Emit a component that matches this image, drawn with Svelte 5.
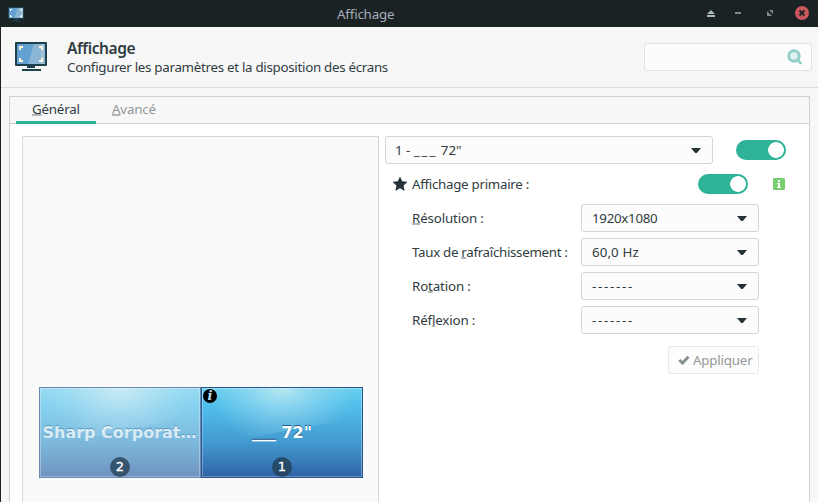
<script>
  const rows = [
    { parts: ['', 'R', 'ésolution :'], value: '1920x1080', kind: 'size' },
    { parts: ['Taux de ', 'r', 'afraîchissement :'], value: '60,0 Hz', kind: 'rate', tight: true },
    { parts: ['Ro', 't', 'ation :'], value: '-------', kind: 'dashes' },
    { parts: ['Réf', 'l', 'exion :'], value: '-------', kind: 'dashes' }
  ];
  const screens = [
    { name: 'Sharp Corporat…', number: 2, active: false },
    { name: '___ 72"', number: 1, active: true }
  ];
</script>

{#snippet monitor(size)}
  <svg class="monitor" width={size} height={size} viewBox="0 0 32 32">
    <rect x="0" y="2" width="32" height="24" rx="1" fill="#1e414e" />
    <rect x="2" y="4" width="28" height="20" fill="#62a1d1" />
    <path d="M19 4h11v20H13z" fill="#8bb5d4" />
    <path d="M26 4h3v20h-3z" fill="#a2c3d8" />
    <path d="M4 6h4v2H6v2H4zM24 6h4v4h-2V8h-2zM4 18h2v2h2v2H4zM26 18h2v4h-4v-2h2z" fill="#fff5df" />
    <path d="M12 26h8v2h-8zM7 29h19v2H7z" fill="#1e414e" />
  </svg>
{/snippet}

{#snippet caret()}
  <svg class="caret" width="10" height="6" viewBox="0 0 10 6"><path d="M0 0h10L6 4.7Q5 5.5 4 4.7z" fill="#263238" /></svg>
{/snippet}

<div class="window">
  <div class="titlebar">
    <div class="appicon">{@render monitor(16)}</div>
    <span class="title">Affichage</span>
    <svg class="controls" width="112" height="27" viewBox="0 0 112 27">
      <path d="M5 10l4 4H1zM1 15h8v2H1z" fill="#a9bcc0" />
      <path d="M29 12h6v2h-6z" fill="#7d898b" />
      <path d="M61 11v5h5zM63 10h4v4z" fill="#7d898b" />
      <circle cx="96" cy="13" r="7" fill="#cb575d" />
      <path d="M93.5 10.5l5 5m0-5l-5 5" stroke="#1b2224" stroke-width="1.8" />
    </svg>
  </div>

  <header>
    <div class="logo">{@render monitor(32)}</div>
    <div class="heading">
      <div class="name">Affichage</div>
      <div class="sub">Configurer les paramètres et la disposition des écrans</div>
    </div>
    <div class="search">
      <svg width="16" height="16" viewBox="0 0 16 16">
        <path d="M10.5 11l3.2 3.2" stroke="#92cfc9" stroke-width="2.6" stroke-linecap="round" />
        <circle cx="7" cy="7" r="5.2" fill="#e2f2f0" stroke="#92cfc9" stroke-width="3" />
      </svg>
    </div>
  </header>

  <div class="notebook">
    <nav>
      <div class="tab current"><span><u>G</u>énéral</span></div>
      <div class="tab"><span><u>A</u>vancé</span></div>
    </nav>
    <main>
      <section class="canvas">
        <div class="screens">
          {#each screens as screen}
            <div class="screen" class:active={screen.active}>
              <svg class="wall" width="162" height="91" viewBox="0 0 162 91">
                <defs>
                  <linearGradient id="sky{screen.number}" x1="0" y1="0" x2="0" y2="1">
                    <stop offset="0" stop-color="#6bd0ec" />
                    <stop offset=".2" stop-color="#52c0ec" />
                    <stop offset=".6" stop-color="#429bd0" />
                    <stop offset=".8" stop-color="#3a80ba" />
                    <stop offset="1" stop-color="#2b5fa3" />
                  </linearGradient>
                  <radialGradient id="glow{screen.number}" gradientUnits="userSpaceOnUse" cx="0" cy="0" r="1" gradientTransform="translate(81 0) scale(74 60)">
                    <stop offset="0" stop-color="#d2f1f4" stop-opacity=".75" />
                    <stop offset=".5" stop-color="#b8e4f2" stop-opacity=".38" />
                    <stop offset="1" stop-color="#a0dced" stop-opacity="0" />
                  </radialGradient>
                </defs>
                <rect width="162" height="91" fill="url(#sky{screen.number})" />
                <path d="M0 0h162v30Q100 40 40 53Q20 55 0 56z" fill="url(#glow{screen.number})" />
                <rect x="1.5" y="1.5" width="159" height="88" fill="none" stroke="#fff" stroke-opacity=".3" />
                <rect x=".5" y=".5" width="161" height="90" fill="none" stroke="#255493" />
              </svg>
              {#if screen.active}
                <span class="info">i</span>
              {/if}
              <span class="label">{screen.name}</span>
              <span class="badge">{screen.number}</span>
            </div>
          {/each}
        </div>
      </section>

      <section class="form">
        <div class="line">
          <div class="combo wide"><span>1 - <span class="blanks">___</span> 72"</span>{@render caret()}</div>
          <div class="switch"></div>
        </div>
        <div class="line">
          <svg class="star" width="14" height="14" viewBox="0 0 14 14"><path d="M7 0l2.1 4.5 4.9.6-3.6 3.4.9 5L7 11l-4.3 2.5.9-5L0 5.1l4.9-.6z" fill="#263238" stroke="#263238" stroke-width=".5" stroke-linejoin="round" /></svg>
          <span class="plabel">Affichage primaire :</span>
          <div class="switch"></div>
          <svg class="hint" width="12" height="12" viewBox="0 0 12 12"><rect width="12" height="12" rx="1" fill="#78ce6e" /><path d="M5 2h2v2H5zM4 5h3v4h1v1H4V9h1V6H4z" fill="#fff" /></svg>
        </div>
        {#each rows as row}
          <div class="line">
            <span class="rlabel" class:tight={row.tight}>{#if row.parts[0]}{row.parts[0]}{/if}<u>{row.parts[1]}</u>{row.parts[2]}</span>
            <div class="combo"><span class={row.kind}>{row.value}</span>{@render caret()}</div>
          </div>
        {/each}
        <button disabled>
          <svg width="12" height="10" viewBox="0 0 12 10"><path d="M1.3 5l3.2 3L10.5 1.8" fill="none" stroke="#899091" stroke-width="3" /></svg>
          <span>Appliquer</span>
        </button>
      </section>
    </main>
  </div>
</div>

<style>
  :global(body) { margin: 0; overflow: hidden; }
  .window {
    box-sizing: border-box;
    width: 818px;
    height: 502px;
    overflow: hidden;
    display: flex;
    flex-direction: column;
    background: #f7f7f7;
    border-left: 1px solid #1b2224;
    color: #303c41;
    font: 13.333px/18px "Noto Sans", sans-serif;
    letter-spacing: -.29px;
    white-space: nowrap;
  }
  svg { display: block; flex: none; }
  u { text-decoration: underline; text-decoration-color: #b0b5b7; text-underline-offset: 0; text-decoration-thickness: 2px; text-decoration-skip-ink: none; }
  .titlebar {
    flex: none;
    height: 27px;
    display: flex;
    align-items: center;
    background: #1b2224;
    margin-left: -1px;
    color: #a6adb9;
    letter-spacing: -.18px;
  }
  .appicon { width: 16px; margin-left: 8px; margin-right: 313px; }
  .title { flex: 1; }
  header {
    flex: none;
    box-sizing: border-box;
    height: 61px;
    display: flex;
    border-bottom: 1px solid #dcdcdc;
  }
  .logo { margin: 13px 20px 0 14px; }
  .heading { flex: 1; padding-top: 11px; }
  .name { font-size: 15.5px; font-weight: 600; line-height: 21px; letter-spacing: -.4px; }
  .sub { line-height: 16px; }
  .search {
    box-sizing: border-box;
    width: 168px;
    height: 28px;
    margin: 16px 6px 0 0;
    padding: 5px 8px 0 0;
    display: flex;
    justify-content: flex-end;
    background: #fcfcfc;
    border: 1px solid #e2e2e2;
    border-radius: 3px;
  }
  .notebook {
    flex: 1;
    display: flex;
    flex-direction: column;
    margin: 8px 8px 0;
    border: 1px solid #cfcfcf;
    border-bottom: 0;
  }
  nav { flex: none; height: 26px; display: flex; padding-left: 6px; border-bottom: 1px solid #cfcfcf; letter-spacing: -.2px; }
  .tab { box-sizing: border-box; width: 80px; height: 27px; padding: 3px 0 0 16px; color: #929899; }
  .current { color: #303c41; border-bottom: 3px solid #2fb398; }
  main { flex: 1; display: flex; background: #fff; padding: 12px 0 0 12px; }
  .canvas {
    box-sizing: border-box;
    width: 357px;
    padding: 250px 0 0 16px;
    background: #fafafa;
    border: 1px solid #d8d8d8;
    border-bottom: 0;
  }
  .screens { display: flex; }
  .screen {
    position: relative;
    width: 162px;
    height: 91px;
    color: #fff;
    font: bold 16px/20px "DejaVu Sans", sans-serif;
    letter-spacing: 0;
    text-align: center;
  }
  .wall { opacity: .68; }
  .active .wall { opacity: 1; }
  .label { position: absolute; left: 0; right: 1px; top: 36px; opacity: .7; text-shadow: 0 -1px 0 rgba(20, 70, 110, .5); }
  .active .label { opacity: 1; right: 0; text-shadow: 0 -1px 0 rgba(15, 55, 100, .8); }
  .badge {
    position: absolute;
    left: 71px;
    top: 70px;
    width: 20px;
    height: 20px;
    border-radius: 50%;
    background: rgba(34, 60, 80, .75);
    font: 13px/20px "DejaVu Sans", sans-serif;
    -webkit-text-stroke: .3px #fff;
  }
  .info {
    position: absolute;
    left: 2px;
    top: 2px;
    width: 14px;
    height: 14px;
    border-radius: 50%;
    background: #000;
    color: #b5dff0;
    font: italic bold 13px/14px "DejaVu Serif", serif;
  }
  .form { flex: 1; margin-left: 6px; display: flex; flex-direction: column; gap: 6px; }
  .line { display: flex; height: 28px; align-items: center; }
  .combo {
    box-sizing: border-box;
    width: 178px;
    height: 28px;
    padding: 0 11px 0 10px;
    display: flex;
    align-items: center;
    justify-content: space-between;
    background: #fcfcfc;
    border: 1px solid #d5d5d5;
    border-radius: 3px;
  }
  .caret { margin-top: 1px; }
  .wide { width: 328px; margin-right: 23px; padding-left: 9px; letter-spacing: -.05px; }
  .blanks { letter-spacing: 2px; }
  .rate { letter-spacing: .1px; }
  .dashes { letter-spacing: 1.7px; }
  .switch {
    box-sizing: border-box;
    width: 50px;
    height: 20px;
    border-radius: 10px;
    background: radial-gradient(circle at 40px 10px, #fff 7.5px, #2fb398 8.2px);
  }
  .star { margin-left: 8px; }
  .plabel { width: 286px; margin-left: 5px; }
  .hint { margin-left: 25px; }
  .rlabel { width: 169px; margin-left: 27px; letter-spacing: -.15px; }
  .tight { letter-spacing: -.31px; }
  button {
    box-sizing: border-box;
    width: 91px;
    height: 28px;
    margin: 6px 0 0 283px;
    padding: 0 0 0 9px;
    display: flex;
    align-items: center;
    gap: 3px;
    background: #fdfdfd;
    border: 1px solid #e8e8e8;
    border-radius: 3px;
    color: #929899;
    font: inherit;
    letter-spacing: -.2px;
  }
</style>
